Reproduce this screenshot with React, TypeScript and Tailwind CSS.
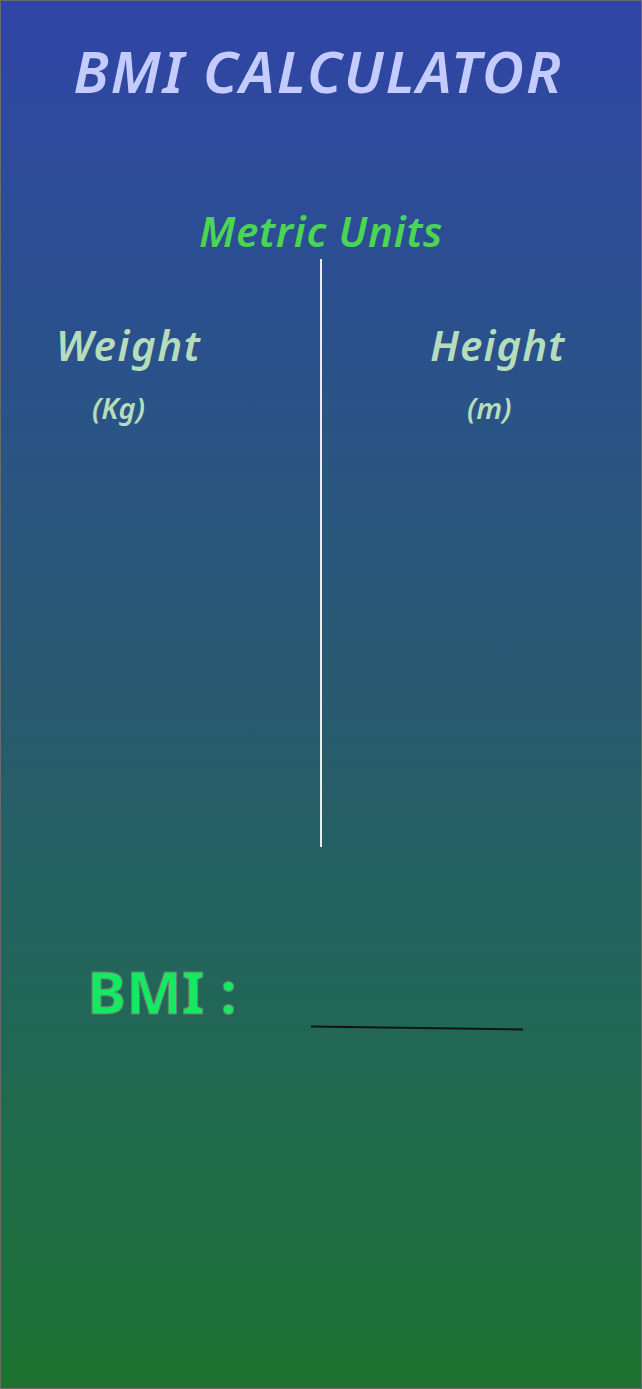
export default function App() {
  return (
    <div
      className="h-[1389px] w-[642px] border border-[#6b6b6b] bg-gradient-to-b from-[#3044a6] via-[#285a70] to-[#1c722e] flex flex-col"
      style={{ fontFamily: '"Noto Sans", "Open Sans", sans-serif' }}
    >
      <h1 className="mt-[34px] pr-[6px] text-center text-[58px] leading-[72px] italic font-semibold text-[#c4ccff] tracking-[2px]">
        BMI CALCULATOR
      </h1>

      <h2 className="mt-[96px] text-center text-[42px] leading-[56px] italic font-semibold text-[#4ad552] tracking-[0.7px]">
        Metric Units
      </h2>

      <div className="w-full flex h-[588px]">
        <div className="w-[319px] flex flex-col pl-[55px]">
          <span className="mt-[58px] text-[42px] leading-[56px] italic font-semibold text-[#b5ddbb] tracking-[1.5px]">
            Weight
          </span>
          <span className="mt-[16px] ml-[36px] text-[29px] leading-[38px] italic font-semibold text-[#b5ddbb]">
            (Kg)
          </span>
        </div>
        <div className="w-[2px] h-full bg-[#e8eef0]" />
        <div className="flex-1 flex flex-col pl-[108px]">
          <span className="mt-[58px] text-[42px] leading-[56px] italic font-semibold text-[#b5ddbb] tracking-[1px]">
            Height
          </span>
          <span className="mt-[16px] ml-[37px] text-[29px] leading-[38px] italic font-semibold text-[#b5ddbb]">
            (m)
          </span>
        </div>
      </div>

      <div className="w-full flex items-end mt-[108px] pl-[86px]">
        <span
          className="text-[59px] leading-[72px] font-bold text-[#14e961]"
          style={{ WebkitTextStroke: "1px #6e7d70" }}
        >
          BMI :
        </span>
        <div className="ml-[74px] mb-[-2px] w-[212px] h-[2px] bg-[#101410] rotate-[0.8deg]" />
      </div>
    </div>
  );
}
